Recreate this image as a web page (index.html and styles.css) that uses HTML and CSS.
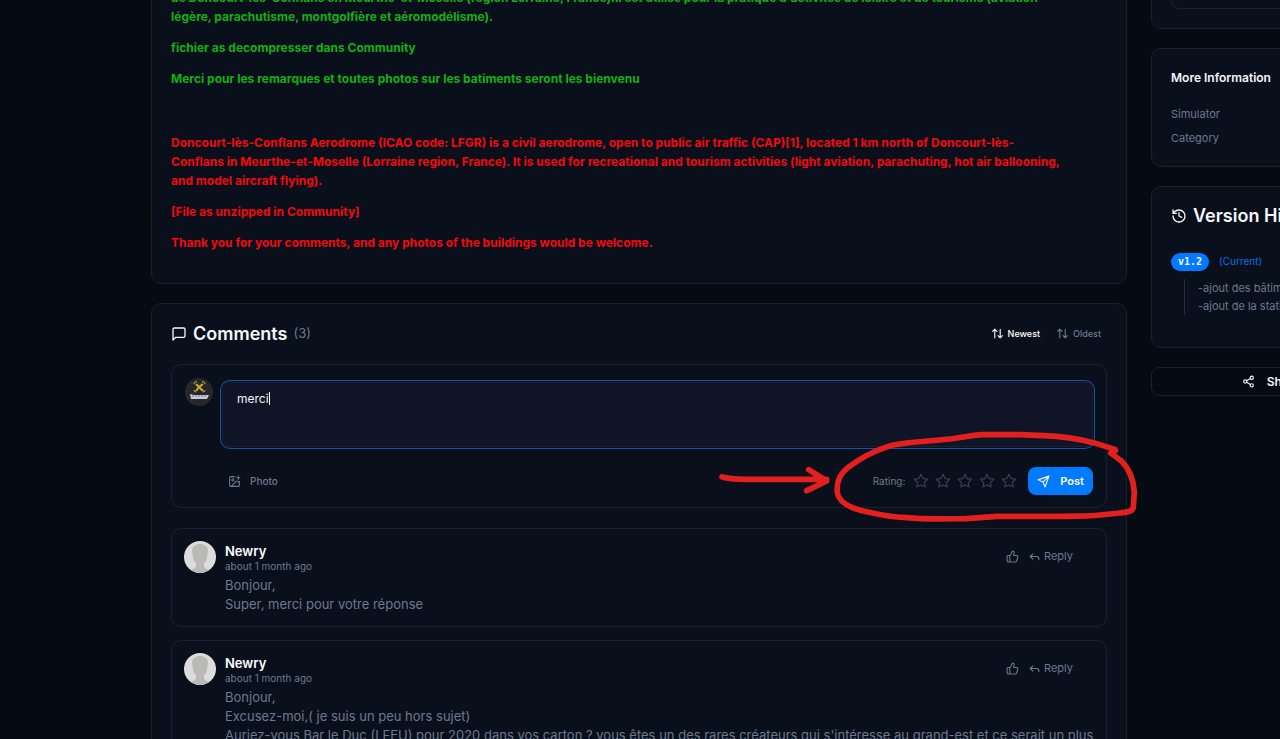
FILE: index.html
```html
<!DOCTYPE html>
<html lang="en">
<head>
  <meta charset="UTF-8" />
  <meta name="viewport" content="width=device-width, initial-scale=1.0" />
  <title>Doncourt-lès-Conflans Aerodrome (LFGR)</title>
  <link rel="stylesheet" href="styles.css">
</head>
<body>
  <svg class="sprite" aria-hidden="true">
    <symbol id="i-message" viewBox="0 0 24 24"><path d="M21 15a2 2 0 0 1-2 2H7l-4 4V5a2 2 0 0 1 2-2h14a2 2 0 0 1 2 2z"/></symbol>
    <symbol id="i-sort" viewBox="0 0 24 24"><path d="M3 8l4-4 4 4M7 4v16M21 16l-4 4-4-4M17 20V4"/></symbol>
    <symbol id="i-image" viewBox="0 0 24 24"><path d="M16 5h6M19 2v6M21 11.500V19a2 2 0 0 1-2 2H5a2 2 0 0 1-2-2V5a2 2 0 0 1 2-2h7.500M21 15l-3.100-3.100a2 2 0 0 0-2.800 0L6 21"/><circle cx="9" cy="9" r="2"/></symbol>
    <symbol id="i-star" viewBox="0 0 24 24"><path d="M12 2l3.090 6.260L22 9.270l-5 4.870 1.180 6.880L12 17.770l-6.180 3.250L7 14.140 2 9.270l6.910-1.010z"/></symbol>
    <symbol id="i-send" viewBox="0 0 24 24"><path d="M22 2l-7 20-4-9-9-4zM22 2L11 13"/></symbol>
    <symbol id="i-like" viewBox="0 0 24 24"><path d="M7 10v12M15 5.880L14 10h5.830a2 2 0 0 1 1.920 2.560l-2.330 8A2 2 0 0 1 17.500 22H4a2 2 0 0 1-2-2v-8a2 2 0 0 1 2-2h2.760a2 2 0 0 0 1.790-1.110L12 2a3.130 3.130 0 0 1 3 3.880z"/></symbol>
    <symbol id="i-reply" viewBox="0 0 24 24"><path d="M9 17l-5-5 5-5M20 18v-2a4 4 0 0 0-4-4H4"/></symbol>
    <symbol id="i-history" viewBox="0 0 24 24"><path d="M3 12a9 9 0 1 0 9-9 9.750 9.750 0 0 0-6.740 2.740L3 8M3 3v5h5M12 7v5l4 2"/></symbol>
    <symbol id="i-share" viewBox="0 0 24 24"><circle cx="18" cy="5" r="3"/><circle cx="6" cy="12" r="3"/><circle cx="18" cy="19" r="3"/><path d="M8.590 13.510l6.830 3.980M15.410 6.510l-6.820 3.980"/></symbol>
    <symbol id="i-person" viewBox="0 0 32 32">
      <rect width="32" height="32" fill="#dcdcdc"/>
      <path d="M8 10c0-5 4-7 8-7s8 2 8 7l-1 6c0 3-1 5-3 6v3c0 2 3 3 5 4v3H7v-3c2-1 5-2 5-4v-3c-2-1-3-3-3-6z" fill="#b9b9b7"/>
    </symbol>
  </svg>

  <div class="page">
    <main class="main">
      <section class="card description">
        <p class="fr">de Doncourt-lès-Conflans en Meurthe-et-Moselle (région Lorraine, France).Il est utilisé pour la pratique d'activités de loisirs et de tourisme (aviation légère, parachutisme, montgolfière et aéromodélisme).</p>
        <p class="fr">fichier as decompresser dans Community</p>
        <p class="fr">Merci pour les remarques et toutes photos sur les batiments seront les bienvenu</p>
        <p class="blank">&nbsp;</p>
        <p class="en">Doncourt-lès-Conflans Aerodrome (ICAO code: LFGR) is a civil aerodrome, open to public air traffic (CAP)[1], located 1 km north of Doncourt-lès-Conflans in Meurthe-et-Moselle (Lorraine region, France). It is used for recreational and tourism activities (light aviation, parachuting, hot air ballooning, and model aircraft flying).</p>
        <p class="en">[File as unzipped in Community]</p>
        <p class="en">Thank you for your comments, and any photos of the buildings would be welcome.</p>
      </section>

      <section class="card comments">
        <header class="comments-head">
          <svg class="icon"><use href="#i-message"/></svg>
          <h2>Comments</h2>
          <span class="count">(3)</span>
          <div class="sort">
            <button type="button" class="active"><svg class="icon icon-sm"><use href="#i-sort"/></svg>Newest</button>
            <button type="button"><svg class="icon icon-sm"><use href="#i-sort"/></svg>Oldest</button>
          </div>
        </header>

        <form class="comment-form">
          <svg class="my-avatar" viewBox="0 0 28 28" aria-hidden="true">
            <circle cx="14" cy="14" r="14" fill="#26272a"/>
            <g fill="none" stroke="#c9b22a" stroke-width="1">
              <path d="M11 6l3 3 4-3M11 13l3-4 4 4" stroke-width="2"/>
              <path d="M9 6a2 2 0 0 1 3-2M17 4a2 2 0 0 1 3 2M9 12a2 2 0 0 0 2 2M20 12a2 2 0 0 1-2 2"/>
            </g>
            <path d="M5 16l4 1h15l-2 4H6z" fill="#c9c6de"/>
            <path d="M7 18h14" stroke="#77739b" stroke-dasharray="2 1"/>
          </svg>
          <div class="form-body">
            <textarea aria-label="Comment">merci</textarea>
            <span class="caret"></span>
            <div class="form-row">
              <button type="button" class="photo"><svg class="icon icon-sm"><use href="#i-image"/></svg>Photo</button>
              <span class="rating-label">Rating:</span>
              <div class="stars">
                <button type="button" aria-label="1 star"><svg class="icon"><use href="#i-star"/></svg></button>
                <button type="button" aria-label="2 stars"><svg class="icon"><use href="#i-star"/></svg></button>
                <button type="button" aria-label="3 stars"><svg class="icon"><use href="#i-star"/></svg></button>
                <button type="button" aria-label="4 stars"><svg class="icon"><use href="#i-star"/></svg></button>
                <button type="button" aria-label="5 stars"><svg class="icon"><use href="#i-star"/></svg></button>
              </div>
              <button type="submit" class="post"><svg class="icon icon-sm"><use href="#i-send"/></svg>Post</button>
            </div>
          </div>

          <!-- hand-drawn marker over the rating controls -->
          <svg class="marker" viewBox="0 0 1350 330" aria-hidden="true">
            <path d="M66 171Q90 177 135 178H380M326 149L380 183L320 212"/>
            <path d="M1245 88L1180 68Q1110 50 1030 47L960 44H850C810 46 780 54 750 57C680 64 600 67 565 79C525 92 480 115 443 143C415 165 409 190 412 218C416 245 445 262 490 273C540 285 590 292 620 293C680 299 740 296 800 296L890 289H1100C1150 288 1180 289 1230 282C1270 278 1298 278 1300 262L1303 215C1300 180 1287 145 1265 124Q1245 108 1232 99L1246 92"/>
          </svg>
        </form>

        <article class="comment">
          <svg class="avatar"><use href="#i-person"/></svg>
          <div class="comment-body">
            <div class="comment-head">
              <div>
                <h3>Newry</h3>
                <time>about 1 month ago</time>
              </div>
              <div class="actions">
                <button type="button" aria-label="Like"><svg class="icon icon-sm"><use href="#i-like"/></svg></button>
                <button type="button"><svg class="icon icon-sm"><use href="#i-reply"/></svg>Reply</button>
              </div>
            </div>
            <p>Bonjour,<br>Super, merci pour votre réponse</p>
          </div>
        </article>

        <article class="comment">
          <svg class="avatar"><use href="#i-person"/></svg>
          <div class="comment-body">
            <div class="comment-head">
              <div>
                <h3>Newry</h3>
                <time>about 1 month ago</time>
              </div>
              <div class="actions">
                <button type="button" aria-label="Like"><svg class="icon icon-sm"><use href="#i-like"/></svg></button>
                <button type="button"><svg class="icon icon-sm"><use href="#i-reply"/></svg>Reply</button>
              </div>
            </div>
            <p>Bonjour,<br>Excusez-moi,( je suis un peu hors sujet)<br>Auriez-vous Bar le Duc (LFEU) pour 2020 dans vos carton ? vous êtes un des rares créateurs qui s'intéresse au grand-est et ce serait un plus</p>
          </div>
        </article>
      </section>
    </main>

    <aside class="side">
      <section class="card"><div class="inner-box"></div></section>
      <section class="card info">
        <h3>More Information</h3>
        <ul>
          <li>Simulator</li>
          <li>Category</li>
        </ul>
      </section>
      <section class="card versions">
        <h2><svg class="icon"><use href="#i-history"/></svg>Version History</h2>
        <div class="version">
          <span class="badge">v1.2</span>
          <span class="current">(Current)</span>
        </div>
        <div class="changes">-ajout des bâtiments<br>-ajout de la station</div>
      </section>
      <button type="button" class="share"><svg class="icon icon-sm"><use href="#i-share"/></svg>Share</button>
    </aside>
  </div>
</body>
</html>
```
FILE: styles.css
```css
* {
  box-sizing: border-box;
}
body {
  margin: 0;
  height: 100vh;
  overflow: hidden;
  background: #060a13;
  color: #f5f7fa;
  font-family: Inter, "Liberation Sans", sans-serif;
  font-size: 13px;
  line-height: 19px;
}
h2, h3, p, ul {
  margin: 0;
  padding: 0;
}
ul {
  list-style: none;
}
h2 {
  font-size: 18px;
  font-weight: 600;
  line-height: 20px;
}
button {
  display: inline-flex;
  align-items: center;
  padding: 0;
  border: 0;
  background: none;
  color: #6b7a92;
  font: inherit;
  cursor: pointer;
}
.sprite {
  display: none;
}
.icon {
  flex: none;
  width: 16px;
  height: 16px;
  fill: none;
  stroke: currentColor;
  stroke-width: 2;
  stroke-linecap: round;
  stroke-linejoin: round;
}
.icon-sm {
  width: 13px;
  height: 13px;
}

/* the sidebar runs past the right edge of the window */
.page {
  display: grid;
  grid-template-columns: minmax(0, 1fr) 240px;
  gap: 24px;
  width: calc(100% + 111px);
  margin-top: -32px;
  padding-left: 151px;
}
.main, .side {
  display: flex;
  flex-direction: column;
  gap: 19px;
}
.card {
  padding: 19px;
  border: 1px solid #19202e;
  border-radius: 10px;
  background: #0a0f1c;
}

.description {
  padding-right: 60px;
}
.description p {
  margin-bottom: 12px;
  font-size: 12px;
  font-weight: 700;
}
.description .blank {
  line-height: 21px;
}
.fr {
  color: #12b012;
}
.en {
  color: #f5080c;
}

.comments-head {
  display: flex;
  align-items: center;
  height: 21px;
  margin-bottom: 20px;
}
.comments-head h2 {
  margin: 0 6px;
}
.count {
  color: #6b7a92;
}
.sort {
  display: flex;
  gap: 16px;
  margin-left: auto;
  padding-right: 6px;
  font-size: 9px;
}
.sort button {
  gap: 4px;
  font-weight: 500;
}
.sort .active {
  color: #fff;
}

.comment-form {
  position: relative;
  display: flex;
  gap: 9px;
  margin-bottom: 20px;
  padding: 13px 13px 12px;
  border: 1px solid #19202e;
  border-radius: 10px;
}
.my-avatar {
  flex: none;
  width: 28px;
  height: 28px;
}
.form-body {
  position: relative;
  flex: 1;
  padding-top: 4px;
}
textarea {
  display: block;
  width: 100%;
  height: 65px;
  margin-bottom: 20px;
  padding: 6px 14px;
  border: 1px solid #19202e;
  border-radius: 8px;
  outline: 0;
  background: #0f1526;
  box-shadow: 0 0 0 1px #0a0f1c, 0 0 0 2px #1355ae;
  color: #f5f7fa;
  font: 12px/19px Inter, "Liberation Sans", sans-serif;
  resize: none;
}
.caret {
  position: absolute;
  top: 14px;
  left: 47px;
  width: 1px;
  height: 13px;
  background: #f5f7fa;
}
.form-row {
  display: flex;
  align-items: center;
  font-size: 11px;
}
.photo {
  gap: 9px;
  margin-right: auto;
  padding-left: 6px;
  font-size: 10px;
  font-weight: 500;
}
.rating-label {
  color: #6b7a92;
  font-size: 10px;
}
.stars {
  display: flex;
  gap: 6px;
  margin: 0 11px 0 8px;
}
.stars button {
  color: #343c4b;
}
.post {
  gap: 10px;
  height: 28px;
  padding: 0 9px;
  border-radius: 8px;
  background: #007aff;
  color: #fff;
  font-weight: 600;
}
.marker {
  position: absolute;
  top: 55px;
  right: -44px;
  width: 450px;
  height: 110px;
  fill: none;
  stroke: #e3201e;
  stroke-width: 17;
  stroke-linecap: round;
  stroke-linejoin: round;
  pointer-events: none;
}

.comment {
  display: flex;
  gap: 9px;
  margin-bottom: 13px;
  padding: 12px;
  border: 1px solid #19202e;
  border-radius: 10px;
}
.avatar {
  flex: none;
  width: 32px;
  height: 32px;
  border-radius: 50%;
}
.comment-body {
  flex: 1;
  color: #6b7a92;
}
.comment-head {
  display: flex;
  justify-content: space-between;
}
.comment-body h3 {
  color: #fff;
  font-size: 13px;
  font-weight: 600;
  line-height: 20px;
}
.comment-body time {
  display: block;
  font-size: 10px;
  line-height: 10px;
}
.comment-body p {
  padding-top: 5px;
}
.actions {
  display: flex;
  align-items: flex-start;
  gap: 9px;
  padding: 6px 21px 0 0;
  font-size: 11px;
}
.actions button {
  gap: 3px;
  height: 19px;
}

.inner-box {
  height: 21px;
  border: 1px solid #19202e;
  border-radius: 8px;
}
.info {
  padding-bottom: 18px;
}
.info h3 {
  margin-bottom: 18px;
  font-size: 12px;
  font-weight: 600;
}
.info li {
  color: #6b7a92;
  font-size: 11px;
}
.info li + li {
  margin-top: 5px;
}
.versions h2 {
  display: flex;
  align-items: center;
  gap: 6px;
  margin-bottom: 26px;
  white-space: nowrap;
}
.version {
  display: flex;
  align-items: center;
  gap: 10px;
}
.badge {
  padding: 0 7px;
  border-radius: 9px;
  background: #007aff;
  font: 700 10px/18px "DejaVu Sans Mono", monospace;
}
.current {
  color: #0a6fe0;
  font-size: 10px;
}
.changes {
  margin: 8px 0 13px 13px;
  padding-left: 13px;
  border-left: 1px solid #232c3d;
  color: #6b7a92;
  font-size: 11px;
  line-height: 18px;
}
.share {
  justify-content: center;
  gap: 12px;
  height: 29px;
  border: 1px solid #19202e;
  border-radius: 8px;
  color: #f5f7fa;
  font-size: 12px;
  font-weight: 600;
}
```
